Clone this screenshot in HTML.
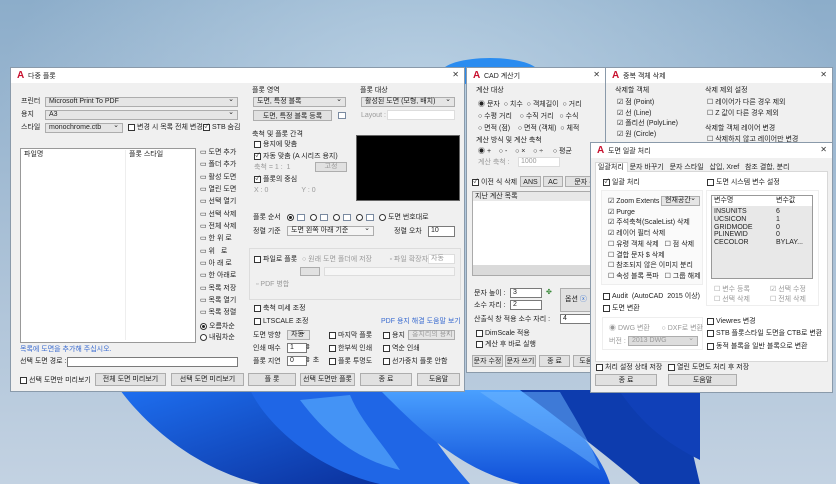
<!DOCTYPE html>
<html><head><meta charset="utf-8">
<style>
*{box-sizing:border-box;margin:0;padding:0}
html,body{width:836px;height:484px;overflow:hidden}
body{position:relative;font-family:"Liberation Sans","Noto Sans CJK KR",sans-serif;font-size:7px;color:#222;
background:radial-gradient(ellipse 420px 260px at 420px 100px,rgba(190,212,230,.9) 0%,rgba(190,212,230,0) 100%),linear-gradient(#8cadca 0%,#a9c0d6 50%,#c3d2e2 100%);}
.w{position:absolute;background:#f0f0f0;border:1px solid #8a9aaa;}
.tb{position:absolute;left:0;right:0;top:0;height:15px;background:#fff;}
.tb b{position:absolute;left:6px;top:2px;color:#c8102e;font-size:10px;font-weight:bold;font-family:"Liberation Sans",sans-serif}
.tb span{position:absolute;left:17px;top:3px;font-size:7px}
.tb i{position:absolute;right:5px;top:2px;font-style:normal;font-size:8px;color:#333}
.a{position:absolute;white-space:nowrap;line-height:8px}
.cb{position:absolute;width:7px;height:7px;border:1px solid #333;background:#fff;font-size:6px;line-height:5px;text-align:center}
.rb{position:absolute;width:7px;height:7px;border:1px solid #333;border-radius:50%;background:#fff}
.rb.on::after{content:"";position:absolute;left:1px;top:1px;width:3px;height:3px;border-radius:50%;background:#222}
.btn{position:absolute;background:#e1e1e1;border:1px solid #adadad;text-align:center;line-height:11px;white-space:nowrap}
.in{position:absolute;background:#fff;border:1px solid #7a7a7a;padding-left:2px;line-height:8px;white-space:nowrap}
.cmb{position:absolute;background:#e5e5e5;border:1px solid #adadad;padding-left:3px;line-height:8px;white-space:nowrap}
.cmb::after{content:"⌄";position:absolute;right:3px;top:-2px;font-size:7px}
.dis{color:#9a9a9a}
.fr{position:absolute;border:1px solid #dcdcdc;}
.ib{position:absolute;width:8px;height:7px;border:1px solid #7a8aa0;background:#fff}
</style></head><body>

<svg style="position:absolute;left:0;top:0" width="836" height="484">
 <defs><linearGradient id="g1" x1="0" y1="0" x2="1" y2="1"><stop offset="0" stop-color="#1e6ff0"/><stop offset="1" stop-color="#0a2f9a"/></linearGradient>
 <linearGradient id="g2" x1="0" y1="0" x2="0" y2="1"><stop offset="0" stop-color="#4aa0ff"/><stop offset="1" stop-color="#1050d8"/></linearGradient></defs>
 <ellipse cx="490" cy="72" rx="48" ry="14" fill="#2a8cf0"/>
 <path d="M120 390 C150 430 200 470 260 484 L400 484 C360 450 330 420 300 390Z" fill="url(#g1)"/>
 <path d="M250 390 C270 430 320 470 380 484 L470 484 C440 450 420 420 410 390Z" fill="#1f66e6"/>
 <path d="M380 390 C420 430 460 470 520 484 L610 484 C600 450 560 410 540 390Z" fill="url(#g2)"/>
 <path d="M520 390 C560 420 600 450 640 484 L700 484 C690 440 680 410 700 390Z" fill="#0d3cae"/>
 <path d="M300 400 C330 440 360 460 400 470 C380 440 360 420 350 395Z" fill="#5db0ff" opacity=".6"/>
 <path d="M480 392 C520 420 560 440 600 470 C590 440 570 410 560 392Z" fill="#6fb8ff" opacity=".5"/>
 <path d="M620 392 C640 420 660 440 700 460 L700 392Z" fill="#1040b8"/>
</svg>

<!-- MAIN WINDOW -->
<div class="w" style="left:10px;top:67px;width:455px;height:325px">
 <div class="tb"><b>A</b><span>다중 플롯</span><i>✕</i></div>
</div>
<div class="a" style="left:21px;top:98px">프린터</div>
<div class="cmb" style="left:45px;top:97px;width:193px;height:10px">Microsoft Print To PDF</div>
<div class="a" style="left:21px;top:111px">용지</div>
<div class="cmb" style="left:45px;top:110px;width:193px;height:10px">A3</div>
<div class="a" style="left:21px;top:124px">스타일</div>
<div class="cmb" style="left:45px;top:123px;width:78px;height:10px">monochrome.ctb</div>
<div class="cb" style="left:128px;top:124px"></div><div class="a" style="left:137px;top:124px">변경 시 목록 전체 변경</div>
<div class="cb" style="left:203px;top:124px">✓</div><div class="a" style="left:212px;top:124px">STB 숨김</div>

<div class="in" style="left:20px;top:148px;width:176px;height:195px;border-color:#999"></div>
<div class="a" style="left:24px;top:151px">파일명</div><div class="a" style="left:129px;top:151px">플롯 스타일</div>
<div style="position:absolute;left:125px;top:150px;width:1px;height:190px;background:#eee"></div>
<div class="a" style="left:200px;top:147px;line-height:12.35px">▭ 도면 추가<br>▭ 폴더 추가<br>▭ 활성 도면<br>▭ 열린 도면<br>▭ 선택 열기<br>▭ 선택 삭제<br>▭ 전체 삭제<br>▭ 한 위 로<br>▭ 위 &nbsp; 로<br>▭ 아 래 로<br>▭ 한 아래로<br>▭ 목록 저장<br>▭ 목록 열기<br>▭ 목록 정렬</div>
<div class="rb on" style="left:200px;top:323px"></div><div class="a" style="left:209px;top:323px">오름차순</div>
<div class="rb" style="left:200px;top:334px"></div><div class="a" style="left:209px;top:334px">내림차순</div>
<div class="a" style="left:20px;top:346px;color:#3a6bd0">목록에 도면을 추가해 주십시오.</div>
<div class="a" style="left:20px;top:358px">선택 도면 경로 :</div>
<div class="in" style="left:67px;top:357px;width:171px;height:10px"></div>

<div class="a" style="left:252px;top:87px">플롯 영역</div>
<div class="cmb" style="left:253px;top:97px;width:93px;height:10px">도면, 특정 블록</div>
<div class="btn" style="left:253px;top:110px;width:79px;height:11px">도면, 특정 블록 등록</div>
<div class="ib" style="left:338px;top:112px"></div>
<div class="a" style="left:360px;top:87px">플롯 대상</div>
<div class="cmb" style="left:361px;top:97px;width:94px;height:10px">활성된 도면 (모형, 배치)</div>
<div class="a dis" style="left:361px;top:112px">Layout :</div>
<div class="in" style="left:387px;top:110px;width:68px;height:10px;border-color:#ddd"></div>

<div class="a" style="left:252px;top:131px">축척 및 플롯 간격</div>
<div class="cb" style="left:254px;top:141px"></div><div class="a" style="left:263px;top:141px">용지에 맞춤</div>
<div class="cb" style="left:254px;top:153px">✓</div><div class="a" style="left:263px;top:153px">자동 맞춤 (A 시리즈 용지)</div>
<div class="a dis" style="left:254px;top:164px">축척 = 1 : &nbsp;1</div>
<div class="btn dis" style="left:315px;top:162px;width:32px;height:10px;line-height:8px">고정</div>
<div class="cb" style="left:254px;top:176px">✓</div><div class="a" style="left:263px;top:176px">플롯의 중심</div>
<div class="a dis" style="left:254px;top:187px">X : 0 &nbsp; &nbsp; &nbsp; &nbsp; &nbsp; &nbsp; &nbsp; &nbsp; Y : 0</div>
<div style="position:absolute;left:356px;top:135px;width:104px;height:66px;background:#000;border:1px solid #666"></div>

<div class="a" style="left:253px;top:214px">플롯 순서</div>
<div class="rb on" style="left:287px;top:214px"></div><div class="ib" style="left:297px;top:214px"></div>
<div class="rb" style="left:310px;top:214px"></div><div class="ib" style="left:320px;top:214px"></div>
<div class="rb" style="left:333px;top:214px"></div><div class="ib" style="left:343px;top:214px"></div>
<div class="rb" style="left:356px;top:214px"></div><div class="ib" style="left:366px;top:214px"></div>
<div class="rb" style="left:379px;top:214px"></div><div class="a" style="left:388px;top:214px">도면 번호대로</div>
<div class="a" style="left:253px;top:228px">정렬 기준</div>
<div class="cmb" style="left:287px;top:226px;width:87px;height:10px;background:#f4f4f4">도면 왼쪽 아래 기준</div>
<div class="a" style="left:394px;top:228px">정렬 오차</div>
<div class="in" style="left:428px;top:226px;width:27px;height:11px">10</div>

<div class="fr" style="left:249px;top:248px;width:212px;height:52px"></div>
<div class="cb" style="left:254px;top:256px"></div><div class="a" style="left:263px;top:256px">파일로 플롯</div>
<div class="a dis" style="left:302px;top:256px">○ 원래 도면 폴더에 저장 &nbsp; &nbsp; &nbsp; &nbsp; ▫ 파일 확장자</div>
<div class="in dis" style="left:428px;top:254px;width:27px;height:10px;border-color:#ddd">자동</div>
<div class="btn dis" style="left:300px;top:267px;width:20px;height:9px"></div>
<div class="in" style="left:324px;top:267px;width:131px;height:9px;border-color:#ddd;background:#f6f6f6"></div>
<div class="a dis" style="left:256px;top:281px">▫ PDF 병합</div>

<div class="cb" style="left:254px;top:305px"></div><div class="a" style="left:263px;top:305px">축척 미세 조정</div>
<div class="cb" style="left:254px;top:318px"></div><div class="a" style="left:263px;top:318px">LTSCALE 조정</div>
<div class="a" style="left:381px;top:318px;color:#3a6bd0">PDF 용지 해결 도움말 보기</div>
<div class="a" style="left:253px;top:332px">도면 방향</div>
<div class="cmb" style="left:287px;top:330px;width:23px;height:10px">자동</div>
<div class="cb" style="left:329px;top:332px"></div><div class="a" style="left:338px;top:332px">마지막 플롯</div>
<div class="cb" style="left:383px;top:332px"></div><div class="a" style="left:392px;top:332px">용지</div>
<div class="cmb dis" style="left:408px;top:330px;width:47px;height:10px">홍지리의 용지</div>
<div class="a" style="left:253px;top:345px">인쇄 매수</div>
<div class="in" style="left:287px;top:343px;width:20px;height:10px">1</div><div class="a" style="left:305px;top:344px">⇕</div>
<div class="cb" style="left:329px;top:345px"></div><div class="a" style="left:338px;top:345px">한부씩 인쇄</div>
<div class="cb" style="left:383px;top:345px"></div><div class="a" style="left:392px;top:345px">역순 인쇄</div>
<div class="a" style="left:253px;top:358px">플롯 지연</div>
<div class="in" style="left:287px;top:356px;width:20px;height:10px">0</div><div class="a" style="left:305px;top:357px">⇕ 초</div>
<div class="cb" style="left:329px;top:358px"></div><div class="a" style="left:338px;top:358px">플롯 투명도</div>
<div class="cb" style="left:383px;top:358px"></div><div class="a" style="left:392px;top:358px">선가중치 플롯 안함</div>

<div class="cb" style="left:20px;top:377px"></div><div class="a" style="left:29px;top:377px">선택 도면만 미리보기</div>
<div class="btn" style="left:95px;top:373px;width:71px;height:13px">전체 도면 미리보기</div>
<div class="btn" style="left:171px;top:373px;width:73px;height:13px">선택 도면 미리보기</div>
<div class="btn" style="left:248px;top:373px;width:48px;height:13px">플 롯</div>
<div class="btn" style="left:300px;top:373px;width:55px;height:13px">선택 도면만 플롯</div>
<div class="btn" style="left:360px;top:373px;width:52px;height:13px">종 료</div>
<div class="btn" style="left:417px;top:373px;width:43px;height:13px">도움말</div>

<!-- CAD CALC -->
<div class="w" style="left:466px;top:67px;width:140px;height:306px">
 <div class="tb"><b>A</b><span>CAD 계산기</span><i>✕</i></div>
</div>
<div class="a" style="left:476px;top:87px">계산 대상</div>
<div class="a" style="left:478px;top:99px;line-height:12px">◉ 문자 &nbsp;○ 치수 &nbsp;○ 객체길이 &nbsp;○ 거리<br>○ 수평 거리 &nbsp; &nbsp;○ 수직 거리 &nbsp; ○ 수식<br>○ 면적 (점) &nbsp; &nbsp;○ 면적 (객체) &nbsp;○ 체적</div>
<div class="a" style="left:476px;top:137px">계산 방식 및 계산 축척</div>
<div class="a" style="left:478px;top:148px">◉ + &nbsp; &nbsp;○ - &nbsp; &nbsp;○ × &nbsp; &nbsp;○ ÷ &nbsp; &nbsp; ○ 평균</div>
<div class="a dis" style="left:478px;top:159px">계산 축척 :</div>
<div class="in dis" style="left:518px;top:157px;width:42px;height:10px;border-color:#ddd">1000</div>
<div class="cb" style="left:472px;top:179px">✓</div><div class="a" style="left:481px;top:179px">이전 식 삭제</div>
<div class="btn" style="left:520px;top:176px;width:21px;height:11px">ANS</div>
<div class="btn" style="left:543px;top:176px;width:20px;height:11px">AC</div>
<div class="btn" style="left:565px;top:176px;width:40px;height:11px">문자 선</div>
<div class="in" style="left:472px;top:191px;width:133px;height:85px;border-color:#aaa"></div>
<div style="position:absolute;left:473px;top:192px;width:131px;height:9px;background:#e8e8e8"></div>
<div class="a" style="left:475px;top:193px">지난 계산 목록</div>
<div style="position:absolute;left:473px;top:265px;width:131px;height:10px;background:#dadada"></div>
<div class="a" style="left:474px;top:290px">문자 높이 :</div>
<div class="in" style="left:510px;top:288px;width:32px;height:10px">3</div>
<div class="a" style="left:546px;top:289px;color:#3a8a3a">✤</div>
<div class="btn" style="left:560px;top:288px;width:45px;height:24px;line-height:22px;text-align:left;padding-left:4px">옵션 <span style="color:#2a6ad0">ⓧ</span></div>
<div class="a" style="left:474px;top:302px">소수 자리 :</div>
<div class="in" style="left:510px;top:300px;width:32px;height:10px">2</div>
<div class="a" style="left:474px;top:316px">산출식 창 적용 소수 자리 :</div>
<div class="in" style="left:560px;top:314px;width:45px;height:10px">4</div>
<div class="cb" style="left:476px;top:330px"></div><div class="a" style="left:485px;top:330px">DimScale 적용</div>
<div class="cb" style="left:476px;top:341px"></div><div class="a" style="left:485px;top:341px">계산 후 바로 실행</div>
<div class="btn" style="left:472px;top:355px;width:31px;height:12px">문자 수정</div>
<div class="btn" style="left:505px;top:355px;width:31px;height:12px">문자 쓰기</div>
<div class="btn" style="left:539px;top:355px;width:31px;height:12px">종 료</div>
<div class="btn" style="left:573px;top:355px;width:32px;height:12px">도움말</div>

<!-- DUPLICATE DELETE -->
<div class="w" style="left:605px;top:67px;width:228px;height:80px">
 <div class="tb"><b>A</b><span>중복 객체 삭제</span><i>✕</i></div>
</div>
<div class="a" style="left:615px;top:87px">삭제할 객체</div>
<div class="a" style="left:617px;top:98px;line-height:10.7px">☑ 점 (Point)<br>☑ 선 (Line)<br>☑ 폴리선 (PolyLine)<br>☑ 원 (Circle)</div>
<div class="a" style="left:705px;top:87px">삭제 제외 설정</div>
<div class="a" style="left:707px;top:98px;line-height:10.7px">☐ 레이어가 다른 경우 제외<br>☐ Z 값이 다른 경우 제외</div>
<div class="a" style="left:705px;top:125px">삭제할 객체 레이어 변경</div>
<div class="a" style="left:707px;top:136px">☐ 삭제하지 않고 레이어만 변경</div>

<!-- BATCH -->
<div class="w" style="left:590px;top:142px;width:243px;height:251px">
 <div class="tb"><b>A</b><span>도면 일괄 처리</span><i>✕</i></div>
</div>
<div style="position:absolute;left:595px;top:171px;width:233px;height:191px;background:#fff;border:1px solid #d8d8d8"></div>
<div style="position:absolute;left:595px;top:162px;width:33px;height:10px;background:#fff;border:1px solid #d8d8d8;border-bottom:none"></div>
<div class="a" style="left:598px;top:164px">일괄처리 &nbsp; 문자 바꾸기 &nbsp; 문자 스타일 &nbsp; 삽입, Xref &nbsp; 참조 결합, 분리</div>
<div class="cb" style="left:603px;top:179px">✓</div><div class="a" style="left:612px;top:179px">일괄 처리</div>
<div class="cb" style="left:707px;top:179px"></div><div class="a" style="left:716px;top:179px">도면 시스템 변수 설정</div>
<div class="fr" style="left:601px;top:190px;width:102px;height:95px;border-color:#eee;background:#fafafa"></div>
<div class="a" style="left:608px;top:197px;line-height:10.7px">☑ Zoom Extents<br>☑ Purge<br>☑ 주석축척(ScaleList) 삭제<br>☑ 레이어 필터 삭제<br>☐ 유령 객체 삭제 &nbsp; ☐ 점 삭제<br>☐ 결합 문자 $ 삭제<br>☐ 참조되지 않은 이미지 분리<br>☐ 속성 블록 폭파 &nbsp; ☐ 그룹 해제</div>
<div class="cmb" style="left:661px;top:196px;width:39px;height:10px">현재공간</div>
<div class="fr" style="left:706px;top:190px;width:113px;height:116px;border-color:#eee"></div>
<div class="in" style="left:711px;top:195px;width:102px;height:84px;background:#e8e8e8;border-color:#999"></div>
<div style="position:absolute;left:712px;top:196px;width:100px;height:10px;background:#fff"></div>
<div class="a" style="left:714px;top:197px">변수명</div><div class="a" style="left:776px;top:197px">변수값</div>
<div class="a" style="left:714px;top:208px;line-height:7.8px">INSUNITS<br>UCSICON<br>GRIDMODE<br>PLINEWID<br>CECOLOR</div>
<div class="a" style="left:776px;top:208px;line-height:7.8px">6<br>1<br>0<br>0<br>BYLAY...</div>
<div class="a dis" style="left:714px;top:285px;line-height:10px">☐ 변수 등록<br>☐ 선택 삭제</div>
<div class="a dis" style="left:770px;top:285px;line-height:10px">☑ 선택 수정<br>☐ 전체 삭제</div>
<div class="cb" style="left:603px;top:293px"></div><div class="a" style="left:612px;top:293px">Audit &nbsp;(AutoCAD &nbsp;2015 이상)</div>
<div class="cb" style="left:603px;top:305px"></div><div class="a" style="left:612px;top:305px">도면 변환</div>
<div class="fr" style="left:602px;top:317px;width:101px;height:33px;border-color:#eee"></div>
<div class="a dis" style="left:609px;top:325px">◉ DWG 변환 &nbsp; &nbsp; &nbsp;○ DXF로 변환</div>
<div class="a dis" style="left:609px;top:338px">버전 :</div>
<div class="cmb dis" style="left:628px;top:336px;width:70px;height:10px;background:#ddd">2013 DWG</div>
<div class="cb" style="left:707px;top:318px"></div><div class="a" style="left:716px;top:318px">Viewres 변경</div>
<div class="cb" style="left:707px;top:330px"></div><div class="a" style="left:716px;top:330px">STB 플롯스타일 도면을 CTB로 변환</div>
<div class="cb" style="left:707px;top:343px"></div><div class="a" style="left:716px;top:343px">동적 블록을 일반 블록으로 변환</div>
<div class="cb" style="left:596px;top:364px"></div><div class="a" style="left:605px;top:364px">처리 설정 상태 저장</div>
<div class="cb" style="left:668px;top:364px"></div><div class="a" style="left:677px;top:364px">열린 도면도 처리 후 저장</div>
<div class="btn" style="left:595px;top:374px;width:62px;height:12px">종 료</div>
<div class="btn" style="left:668px;top:374px;width:69px;height:12px">도움말</div>
</body></html>
